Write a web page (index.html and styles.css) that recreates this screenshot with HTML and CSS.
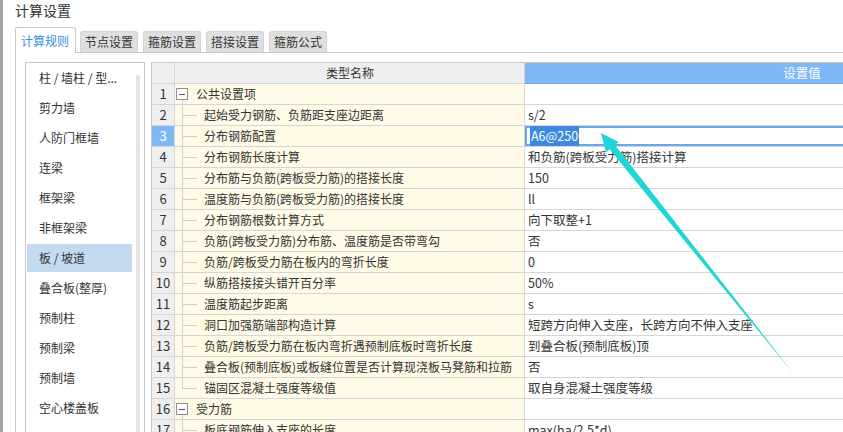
FILE: index.html
```html
<!DOCTYPE html>
<html lang="zh-CN">
<head>
<meta charset="utf-8">
<title>计算设置</title>
<link rel="stylesheet" href="styles.css">
</head>
<body>
<div class="screen">
  <div class="edge"></div>
  <div class="window">
    <div class="title">计算设置</div>
    <div class="tabs">
      <div class="tab active">计算规则</div>
      <div class="tab">节点设置</div>
      <div class="tab">箍筋设置</div>
      <div class="tab">搭接设置</div>
      <div class="tab">箍筋公式</div>
    </div>
    <div class="panel">
      <div class="sidebar">
        <ul class="nav">
          <li>柱 / 墙柱 / 型...</li>
          <li>剪力墙</li>
          <li>人防门框墙</li>
          <li>连梁</li>
          <li>框架梁</li>
          <li>非框架梁</li>
          <li class="on">板 / 坡道</li>
          <li>叠合板(整厚)</li>
          <li>预制柱</li>
          <li>预制梁</li>
          <li>预制墙</li>
          <li>空心楼盖板</li>
        </ul>
        <div class="scroll"><div class="thumb"></div></div>
      </div>
      <div class="grid">
        <div class="c num hd"></div>
        <div class="c name hd">类型名称</div>
        <div class="c val hd blue">设置值</div>

        <div class="c num">1</div>
        <div class="c name group"><span class="minus"></span><span class="gtext">公共设置项</span></div>
        <div class="c val"></div>

        <div class="c num">2</div>
        <div class="c name child"><span class="branch"></span><span class="ctext">起始受力钢筋、负筋距支座边距离</span></div>
        <div class="c val">s/2</div>

        <div class="c num sel">3</div>
        <div class="c name child"><span class="branch"></span><span class="ctext">分布钢筋配置</span></div>
        <div class="c val editing"><span class="hl">A6@250</span></div>

        <div class="c num">4</div>
        <div class="c name child"><span class="branch"></span><span class="ctext">分布钢筋长度计算</span></div>
        <div class="c val">和负筋(跨板受力筋)搭接计算</div>

        <div class="c num">5</div>
        <div class="c name child"><span class="branch"></span><span class="ctext">分布筋与负筋(跨板受力筋)的搭接长度</span></div>
        <div class="c val">150</div>

        <div class="c num">6</div>
        <div class="c name child"><span class="branch"></span><span class="ctext">温度筋与负筋(跨板受力筋)的搭接长度</span></div>
        <div class="c val">ll</div>

        <div class="c num">7</div>
        <div class="c name child"><span class="branch"></span><span class="ctext">分布钢筋根数计算方式</span></div>
        <div class="c val">向下取整+1</div>

        <div class="c num">8</div>
        <div class="c name child"><span class="branch"></span><span class="ctext">负筋(跨板受力筋)分布筋、温度筋是否带弯勾</span></div>
        <div class="c val">否</div>

        <div class="c num">9</div>
        <div class="c name child"><span class="branch"></span><span class="ctext">负筋/跨板受力筋在板内的弯折长度</span></div>
        <div class="c val">0</div>

        <div class="c num">10</div>
        <div class="c name child"><span class="branch"></span><span class="ctext">纵筋搭接接头错开百分率</span></div>
        <div class="c val">50%</div>

        <div class="c num">11</div>
        <div class="c name child"><span class="branch"></span><span class="ctext">温度筋起步距离</span></div>
        <div class="c val">s</div>

        <div class="c num">12</div>
        <div class="c name child"><span class="branch"></span><span class="ctext">洞口加强筋端部构造计算</span></div>
        <div class="c val">短跨方向伸入支座，长跨方向不伸入支座</div>

        <div class="c num">13</div>
        <div class="c name child"><span class="branch"></span><span class="ctext">负筋/跨板受力筋在板内弯折遇预制底板时弯折长度</span></div>
        <div class="c val">到叠合板(预制底板)顶</div>

        <div class="c num">14</div>
        <div class="c name child"><span class="branch"></span><span class="ctext">叠合板(预制底板)或板缝位置是否计算现浇板马凳筋和拉筋</span></div>
        <div class="c val">否</div>

        <div class="c num">15</div>
        <div class="c name child"><span class="branch last"></span><span class="ctext">锚固区混凝土强度等级值</span></div>
        <div class="c val">取自身混凝土强度等级</div>

        <div class="c num">16</div>
        <div class="c name group"><span class="minus"></span><span class="gtext">受力筋</span></div>
        <div class="c val"></div>

        <div class="c num">17</div>
        <div class="c name child"><span class="branch"></span><span class="ctext">板底钢筋伸入支座的长度</span></div>
        <div class="c val">max(ha/2,5*d)</div>
      </div>
    </div>
  </div>
  <svg class="arrow" width="843" height="432" viewBox="0 0 843 432">
    <polygon points="601,133 618.5,142 615,145 793,373 609.5,149.3 606,152.5" fill="#1fd6d4"/>
  </svg>
</div>
</body>
</html>
```

FILE: styles.css
```css
* { box-sizing: border-box; }
html, body { margin: 0; padding: 0; background: #fff; }
body {
  font-family: "Noto Sans CJK SC", "Noto Sans", sans-serif;
  font-size: 12px;
  color: #333;
}
.screen {
  position: relative;
  width: 843px;
  height: 432px;
  overflow: hidden;
  display: flex;
}
.edge {
  flex: none;
  width: 3px;
  background: #a4a4a4;
}
.window {
  flex: none;
  width: 1200px;
  padding-left: 12px;
}
.title {
  height: 27px;
  font-size: 14px;
  line-height: 20px;
  color: #333;
}
.tabs {
  display: flex;
  align-items: flex-end;
  height: 25px;
}
.tab {
  height: 21px;
  line-height: 20px;
  padding: 0 4px;
  margin-left: 5px;
  background: #dfdfdf;
  border: 1px solid #d4d4d4;
  border-bottom: none;
  border-radius: 3px 3px 0 0;
  color: #333;
  white-space: nowrap;
}
.tab.active {
  height: 26px;
  line-height: 25px;
  margin-left: 0;
  margin-right: -1px;
  margin-bottom: -1px;
  padding: 0 6px 0 5px;
  background: #fff;
  border-color: #c9c9c9;
  color: #3b8de6;
  position: relative;
  z-index: 1;
}
.panel {
  display: flex;
  gap: 6px;
  border-top: 1px solid #c9c9c9;
  border-left: 1px solid #c9c9c9;
  padding: 9px 0 0 9px;
  height: 400px;
}
.sidebar {
  flex: none;
  width: 120px;
  height: 420px;
  border: 1px solid #c9c9c9;
  display: flex;
  background: #fff;
}
.nav {
  list-style: none;
  margin: 0;
  padding: 1px 0 0 1px;
  width: 106px;
}
.nav li {
  height: 28px;
  line-height: 28px;
  margin-bottom: 2px;
  padding-left: 12px;
  white-space: nowrap;
  color: #333;
}
.nav li.on { background: #c4daf1; }
.scroll { flex: 1; padding: 12px 0 0 4px; }
.thumb {
  width: 4px;
  height: 400px;
  background: #e4e4e4;
  border-radius: 2px;
}
.grid {
  flex: none;
  display: grid;
  grid-template-columns: 23px 350px 552px;
  grid-auto-rows: 21px;
  border-top: 1px solid #c8c8c8;
  border-left: 1px solid #c8c8c8;
  align-self: flex-start;
}
.c {
  border-right: 1px solid #d6d6d6;
  border-bottom: 1px solid #d6d6d6;
  line-height: 20px;
  white-space: nowrap;
  overflow: hidden;
}
.num {
  background: #efefef;
  text-align: center;
  font-size: 13px;
}
.num.sel { background: #7fb8f6; color: #fff; }
.hd { background: #efefef; text-align: center; }
.hd.blue {
  background: #7fb8f6;
  color: #fff;
  border-bottom-color: #6aa6ea;
}
.name {
  background: #fffbe6;
  display: flex;
  align-items: center;
  padding-left: 1px;
}
.name.hd { display: block; background: #efefef; }
.val { background: #fff; padding-left: 3px; font-size: 12.5px; }
.val.editing {
  box-shadow: inset 0 0 0 2px #6ba6e8;
  padding-left: 5px;
  border-right-color: #6ba6e8;
}
.hl {
  background: #3c8ae0;
  color: #fff;
  padding: 1px 1px;
}
.group {
  background: linear-gradient(#cfcfcf, #cfcfcf) 7px 100% / 1px 4px no-repeat, #fffbe6;
}
.minus {
  flex: none;
  width: 12px;
  height: 12px;
  border: 1px solid #8f8f8f;
  background: linear-gradient(#555, #555) center / 6px 1px no-repeat, #fff;
}
.gtext { margin-left: 8px; }
.child { padding-left: 7px; }
.branch {
  flex: none;
  width: 15px;
  align-self: stretch;
  background:
    linear-gradient(#cfcfcf, #cfcfcf) 0 0 / 1px 100% no-repeat,
    linear-gradient(#cfcfcf, #cfcfcf) 0 50% / 100% 1px no-repeat;
}
.branch.last {
  background:
    linear-gradient(#cfcfcf, #cfcfcf) 0 0 / 1px 50% no-repeat,
    linear-gradient(#cfcfcf, #cfcfcf) 0 50% / 100% 1px no-repeat;
}
.ctext { margin-left: 7px; }
.arrow {
  position: absolute;
  left: 0;
  top: 0;
  pointer-events: none;
}
```
